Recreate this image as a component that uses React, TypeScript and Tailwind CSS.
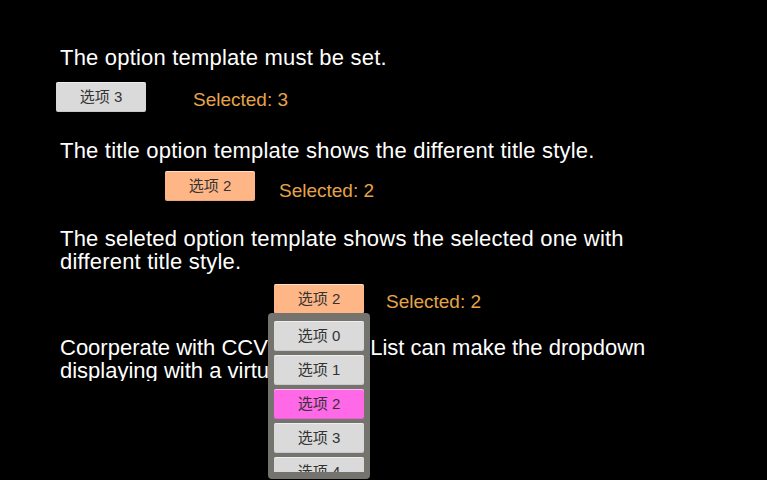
import React from "react";

const font = "font-['Liberation_Sans','Noto_Sans_CJK_SC',sans-serif]";

type Tone = "gray" | "peach" | "pink";

const toneClass: Record<Tone, string> = {
  gray: "bg-[#dadada]",
  peach: "bg-[#ffb686]",
  pink: "bg-[#ff68e6]",
};

const OptionButton: React.FC<{ label: string; tone: Tone }> = ({ label, tone }) => (
  <div
    className={`w-[90px] h-[30px] shrink-0 rounded-[2px] ${toneClass[tone]} shadow-[inset_0_1px_0_rgba(255,255,255,0.55),inset_0_-1px_0_rgba(0,0,0,0.08)] flex items-center justify-center text-[15px] text-[#333333]`}
  >
    {label}
  </div>
);

const Title: React.FC<{ children: React.ReactNode; className?: string }> = ({
  children,
  className = "tracking-[0.2px]",
}) => (
  <p className={`w-[600px] text-[22px] leading-[23px] text-white ${className}`}>
    {children}
  </p>
);

const Selected: React.FC<{ value: number; className?: string }> = ({ value, className = "" }) => (
  <span className={`text-[19px] leading-[30px] text-[#e6a449] ${className}`}>
    Selected: {value}
  </span>
);

const options = [0, 1, 2, 3, 4, 5];

export default function App() {
  return (
    <div className={`w-[767px] h-[480px] overflow-hidden bg-black ${font}`}>
      <div className="flex flex-col pt-[46px] pl-[60px]">
        <Title>The option template must be set.</Title>
        <div className="flex items-start h-[30px] mt-[13px] -ml-[4px]">
          <OptionButton label="选项 3" tone="gray" />
          <Selected value={3} className="ml-[47px] mt-[3px]" />
        </div>

        <Title className="tracking-[0.2px] mt-[27px]">
          The title option template shows the different title style.
        </Title>
        <div className="flex items-start h-[30px] mt-[9px] ml-[105px]">
          <OptionButton label="选项 2" tone="peach" />
          <Selected value={2} className="ml-[24px] mt-[5px]" />
        </div>

        <Title className="tracking-[0.2px] mt-[26px]">
          The seleted option template shows the selected one with different title style.
        </Title>
        <div className="flex items-start h-[30px] mt-[11px] ml-[214px]">
          <div className="relative z-10">
            <OptionButton label="选项 2" tone="peach" />
            {/* dropdown list, scrolled content clipped */}
            <div className="absolute left-[-6px] top-[29px] w-[102px] rounded-[4px] bg-[#74736e] px-[6px] pt-[8px] pb-[7px]">
              <div className="h-[151px] overflow-hidden flex flex-col gap-[4px]">
                {options.map((i) => (
                  <OptionButton key={i} label={`选项 ${i}`} tone={i === 2 ? "pink" : "gray"} />
                ))}
              </div>
            </div>
          </div>
          <Selected value={2} className="ml-[22px] mt-[3px]" />
        </div>

        <div className="mt-[22px] h-[45px] overflow-hidden">
          <Title className="tracking-normal">
            Coorperate with CCVirtualScrollList can make the dropdown displaying with a virtual list.
          </Title>
        </div>
      </div>
    </div>
  );
}
